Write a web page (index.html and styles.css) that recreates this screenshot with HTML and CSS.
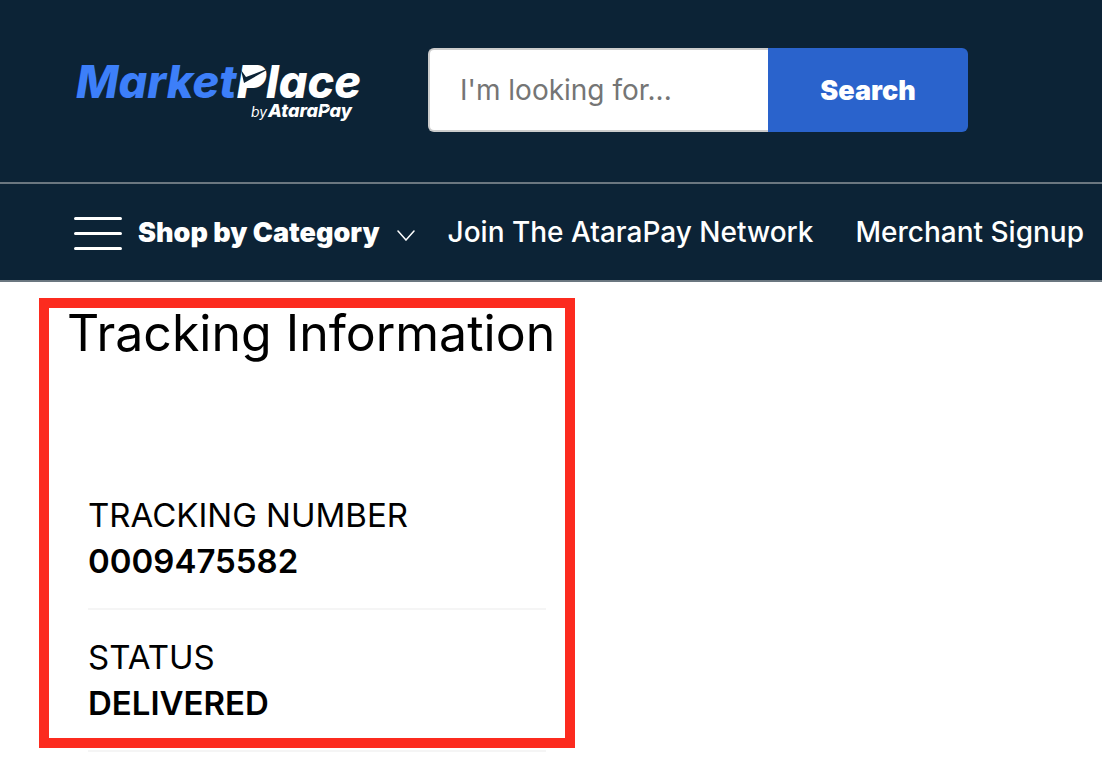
FILE: index.html
```html
<!DOCTYPE html>
<html lang="en">
<head>
    <meta charset="UTF-8">
    <meta name="viewport" content="width=device-width, initial-scale=1.0">
    <title>Tracking Information - MarketPlace by AtaraPay</title>
    <link rel="stylesheet" href="styles.css">
</head>
<body>
    <header class="header">
        <div class="header-top">
            <a class="logo" href="#" aria-label="MarketPlace by AtaraPay">
                <svg width="292" height="68" viewBox="0 0 292 68">
                    <text class="logo-name" x="2" y="42"><tspan class="logo-blue">Market</tspan>Place</text>
                    <text class="logo-by" x="177" y="61">by</text>
                    <text class="logo-brand" x="194" y="61">AtaraPay</text>
                    <!-- filled bowl and check mark of the P -->
                    <path d="M171 10H184Q194 12 191 21Q187 31 176 31H167Z" fill="#fff"/>
                    <path class="logo-check" d="M167 14L172 21L198 11L170 27Z"/>
                    <path class="logo-check" d="M248 50L250 53L259 49L249 55Z"/>
                </svg>
            </a>
            <form class="search">
                <input class="search-input" type="text" aria-label="Search products" placeholder="I'm looking for...">
                <button class="search-button" type="submit">Search</button>
            </form>
        </div>
        <nav class="nav">
            <button class="category" type="button">
                <svg width="48" height="36" viewBox="0 0 48 36">
                    <path d="M1.5 4.5H46.5M1.5 19.5H46.5M1.5 34.5H46.5" fill="none" stroke="#fff" stroke-width="3" stroke-linecap="round"/>
                </svg>
                <span>Shop by Category</span>
                <svg width="20" height="18" viewBox="0 0 20 18">
                    <path d="M2 8L10 17L18 8" fill="none" stroke="#fff" stroke-width="1.5" stroke-linecap="round"/>
                </svg>
            </button>
            <a href="#">Join The AtaraPay Network</a>
            <a href="#">Merchant Signup</a>
        </nav>
    </header>
    <main>
        <section class="tracking">
            <h1>Tracking Information</h1>
            <dl class="details">
                <div class="detail">
                    <dt>TRACKING NUMBER</dt>
                    <dd>0009475582</dd>
                </div>
                <div class="detail">
                    <dt>STATUS</dt>
                    <dd>DELIVERED</dd>
                </div>
            </dl>
            <div class="highlight"></div>
        </section>
    </main>
</body>
</html>
```
FILE: styles.css
```css
body {
    margin: 0;
    font-family: Inter, "Liberation Sans", sans-serif;
    background-color: #ffffff;
    color: #000000;
}

.header {
    background-color: #0c2336;
    color: #ffffff;
    border-bottom: 2px solid #6b7780;
}

.header-top {
    display: flex;
    align-items: center;
    gap: 62px;
    padding: 48px 74px 50px;
    border-bottom: 2px solid #6b7780;
}

.logo {
    display: flex;
    flex-shrink: 0;
}

.logo svg {
    overflow: visible;
}

.logo text {
    font-style: italic;
    fill: #ffffff;
}

.logo .logo-name {
    font-size: 45px;
    font-weight: 800;
}

.logo .logo-blue {
    fill: #3d7ff9;
}

.logo .logo-by {
    font-size: 14px;
}

.logo .logo-brand {
    font-size: 18px;
    font-weight: 800;
}

.logo-check {
    fill: #0c2336;
}

/* Search bar */
.search {
    display: flex;
    flex: 1;
    max-width: 540px;
    height: 84px;
}

.search-input {
    flex: 1;
    min-width: 0;
    box-sizing: border-box;
    padding: 0 30px;
    border: 2px solid #cccccc;
    border-right: none;
    border-radius: 6px 0 0 6px;
    background-color: #ffffff;
    font-family: inherit;
    font-size: 28px;
}

.search-input::placeholder {
    color: #757575;
}

.search-button {
    width: 200px;
    border: none;
    border-radius: 0 6px 6px 0;
    background-color: #2a63cc;
    color: #ffffff;
    font-family: inherit;
    font-size: 27px;
    font-weight: 900;
    cursor: pointer;
}

/* Navigation */
.nav {
    display: flex;
    align-items: center;
    gap: 32px;
    height: 96px;
    padding-left: 74px;
    white-space: nowrap;
    font-size: 28px;
}

.nav a {
    color: #ffffff;
    font-weight: 500;
    text-decoration: none;
}

.nav a + a {
    margin-left: 10px;
}

.category {
    display: flex;
    align-items: center;
    gap: 16px;
    padding: 0;
    border: none;
    background: none;
    color: #ffffff;
    font-family: inherit;
    font-size: 27px;
    font-weight: 900;
    cursor: pointer;
}

/* Tracking details */
.tracking {
    position: relative;
    box-sizing: border-box;
    max-width: 536px;
    margin: 16px 39px 0;
    padding: 6px 29px 0 28px;
}

.tracking h1 {
    margin: 0;
    font-size: 50px;
    font-weight: 400;
    line-height: 58px;
    white-space: nowrap;
}

.details {
    margin: 106px 0 0 21px;
    font-size: 33px;
    line-height: 46px;
}

.detail {
    padding: 24px 0;
    border-bottom: 2px solid #f5f5f5;
}

.detail dd {
    margin: 0;
    font-weight: 600;
}

.highlight {
    position: absolute;
    inset: 0 0 4px;
    border: 10px solid #fc2b1f;
    pointer-events: none;
}
```
